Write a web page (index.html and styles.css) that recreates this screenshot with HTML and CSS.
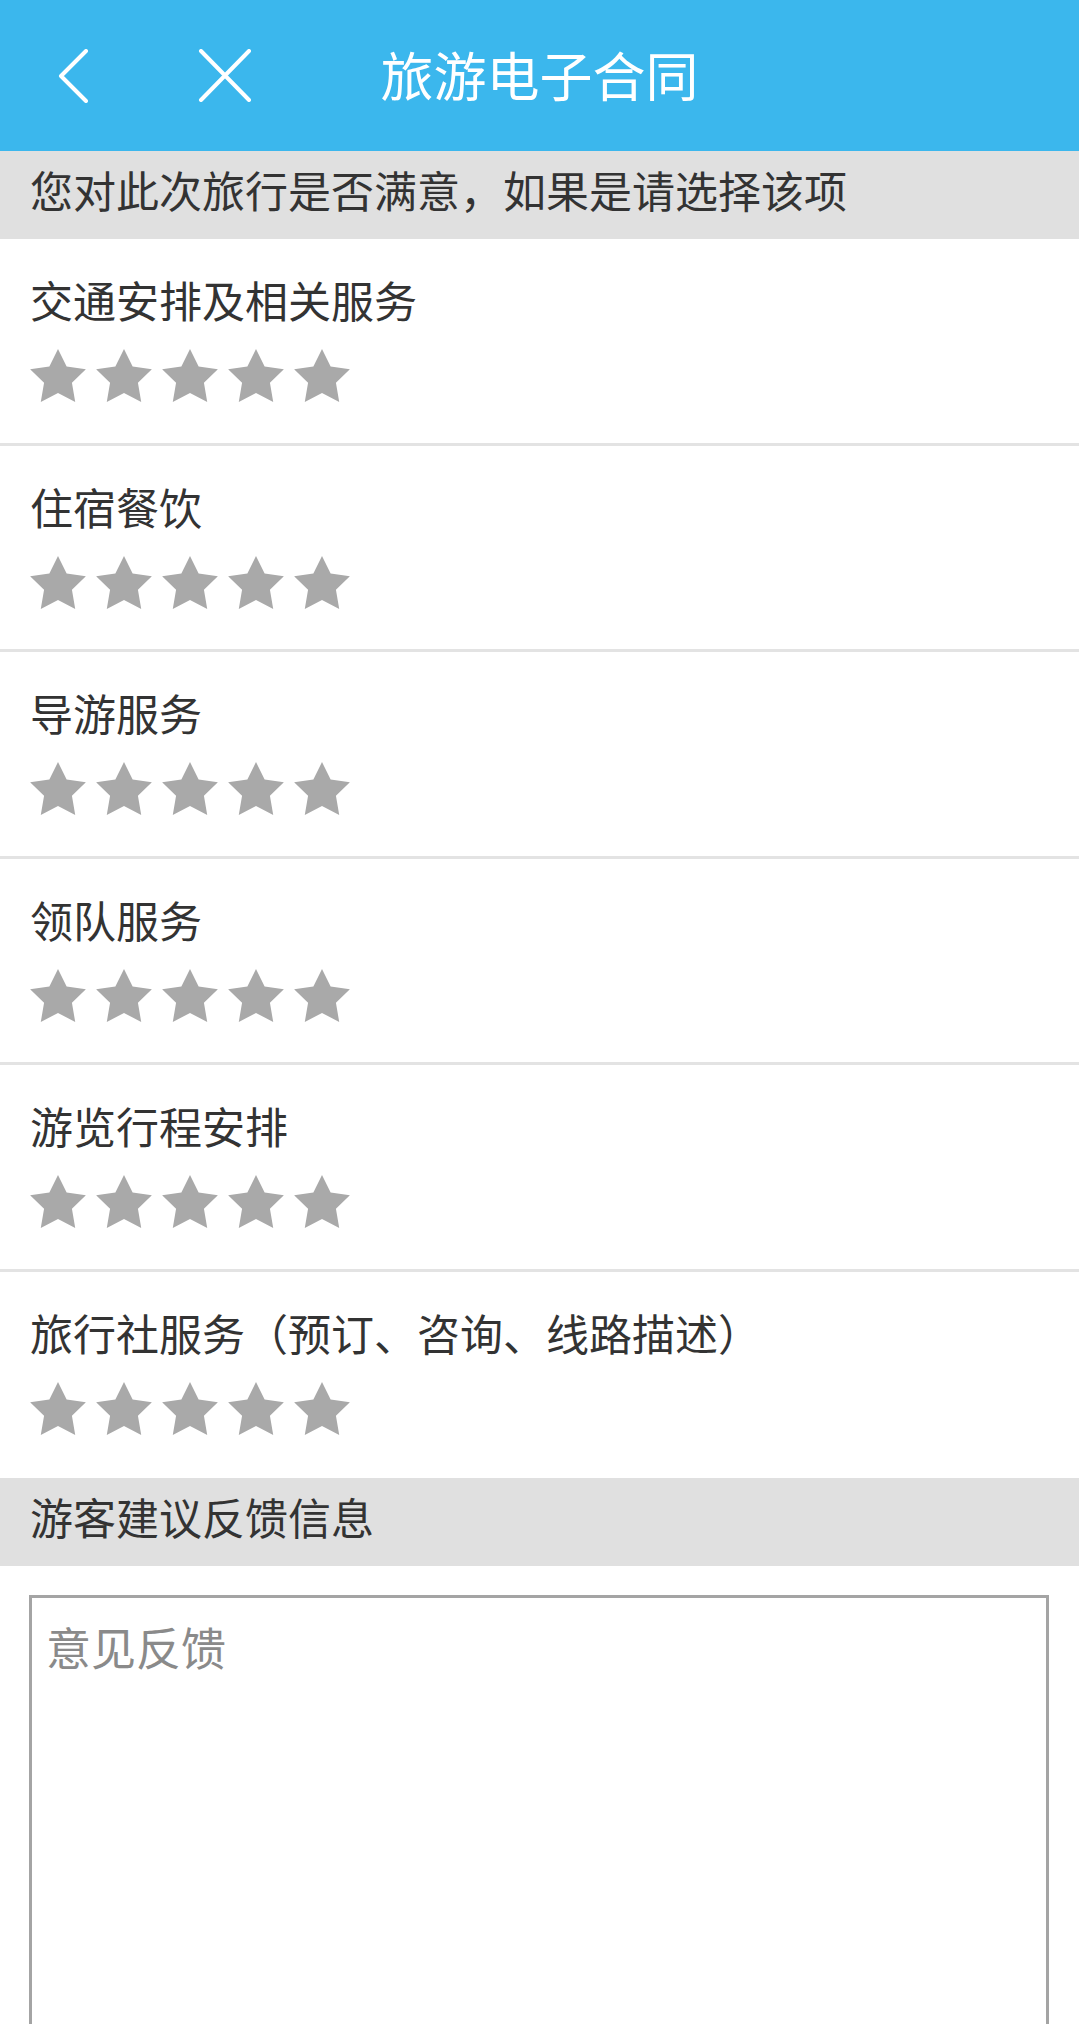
FILE: index.html
```html
<!DOCTYPE html>
<html lang="zh-CN">
<head>
<meta charset="utf-8">
<title>旅游电子合同</title>
<link rel="stylesheet" href="styles.css">
</head>
<body>
<header class="topbar">
  <div class="nav-icons">
    <svg class="icon-back" viewBox="0 0 30 54" aria-hidden="true"><polyline points="28,2 3,27 28,52" fill="none" stroke="#fff" stroke-width="4" stroke-linecap="round" stroke-linejoin="round"/></svg>
    <svg class="icon-close" viewBox="0 0 54 53" aria-hidden="true"><path d="M3 2 L51 51 M51 2 L3 51" fill="none" stroke="#fff" stroke-width="4" stroke-linecap="round"/></svg>
  </div>
  <h1 class="title">旅游电子合同</h1>
  <div></div>
</header>

<div class="section-bar">您对此次旅行是否满意，如果是请选择该项</div>

<div class="rating-list">
  <div class="rating-row">
    <div class="rating-label">交通安排及相关服务</div>
    <div class="stars">
      <svg class="star" viewBox="2 2 20 19.02"><path d="M12 2l3.09 6.26L22 9.27l-5 4.87 1.18 6.88L12 17.77l-6.18 3.25L7 14.14 2 9.27l6.91-1.01L12 2z"/></svg>
      <svg class="star" viewBox="2 2 20 19.02"><path d="M12 2l3.09 6.26L22 9.27l-5 4.87 1.18 6.88L12 17.77l-6.18 3.25L7 14.14 2 9.27l6.91-1.01L12 2z"/></svg>
      <svg class="star" viewBox="2 2 20 19.02"><path d="M12 2l3.09 6.26L22 9.27l-5 4.87 1.18 6.88L12 17.77l-6.18 3.25L7 14.14 2 9.27l6.91-1.01L12 2z"/></svg>
      <svg class="star" viewBox="2 2 20 19.02"><path d="M12 2l3.09 6.26L22 9.27l-5 4.87 1.18 6.88L12 17.77l-6.18 3.25L7 14.14 2 9.27l6.91-1.01L12 2z"/></svg>
      <svg class="star" viewBox="2 2 20 19.02"><path d="M12 2l3.09 6.26L22 9.27l-5 4.87 1.18 6.88L12 17.77l-6.18 3.25L7 14.14 2 9.27l6.91-1.01L12 2z"/></svg>
    </div>
  </div>
  <div class="rating-row">
    <div class="rating-label">住宿餐饮</div>
    <div class="stars">
      <svg class="star" viewBox="2 2 20 19.02"><path d="M12 2l3.09 6.26L22 9.27l-5 4.87 1.18 6.88L12 17.77l-6.18 3.25L7 14.14 2 9.27l6.91-1.01L12 2z"/></svg>
      <svg class="star" viewBox="2 2 20 19.02"><path d="M12 2l3.09 6.26L22 9.27l-5 4.87 1.18 6.88L12 17.77l-6.18 3.25L7 14.14 2 9.27l6.91-1.01L12 2z"/></svg>
      <svg class="star" viewBox="2 2 20 19.02"><path d="M12 2l3.09 6.26L22 9.27l-5 4.87 1.18 6.88L12 17.77l-6.18 3.25L7 14.14 2 9.27l6.91-1.01L12 2z"/></svg>
      <svg class="star" viewBox="2 2 20 19.02"><path d="M12 2l3.09 6.26L22 9.27l-5 4.87 1.18 6.88L12 17.77l-6.18 3.25L7 14.14 2 9.27l6.91-1.01L12 2z"/></svg>
      <svg class="star" viewBox="2 2 20 19.02"><path d="M12 2l3.09 6.26L22 9.27l-5 4.87 1.18 6.88L12 17.77l-6.18 3.25L7 14.14 2 9.27l6.91-1.01L12 2z"/></svg>
    </div>
  </div>
  <div class="rating-row">
    <div class="rating-label">导游服务</div>
    <div class="stars">
      <svg class="star" viewBox="2 2 20 19.02"><path d="M12 2l3.09 6.26L22 9.27l-5 4.87 1.18 6.88L12 17.77l-6.18 3.25L7 14.14 2 9.27l6.91-1.01L12 2z"/></svg>
      <svg class="star" viewBox="2 2 20 19.02"><path d="M12 2l3.09 6.26L22 9.27l-5 4.87 1.18 6.88L12 17.77l-6.18 3.25L7 14.14 2 9.27l6.91-1.01L12 2z"/></svg>
      <svg class="star" viewBox="2 2 20 19.02"><path d="M12 2l3.09 6.26L22 9.27l-5 4.87 1.18 6.88L12 17.77l-6.18 3.25L7 14.14 2 9.27l6.91-1.01L12 2z"/></svg>
      <svg class="star" viewBox="2 2 20 19.02"><path d="M12 2l3.09 6.26L22 9.27l-5 4.87 1.18 6.88L12 17.77l-6.18 3.25L7 14.14 2 9.27l6.91-1.01L12 2z"/></svg>
      <svg class="star" viewBox="2 2 20 19.02"><path d="M12 2l3.09 6.26L22 9.27l-5 4.87 1.18 6.88L12 17.77l-6.18 3.25L7 14.14 2 9.27l6.91-1.01L12 2z"/></svg>
    </div>
  </div>
  <div class="rating-row">
    <div class="rating-label">领队服务</div>
    <div class="stars">
      <svg class="star" viewBox="2 2 20 19.02"><path d="M12 2l3.09 6.26L22 9.27l-5 4.87 1.18 6.88L12 17.77l-6.18 3.25L7 14.14 2 9.27l6.91-1.01L12 2z"/></svg>
      <svg class="star" viewBox="2 2 20 19.02"><path d="M12 2l3.09 6.26L22 9.27l-5 4.87 1.18 6.88L12 17.77l-6.18 3.25L7 14.14 2 9.27l6.91-1.01L12 2z"/></svg>
      <svg class="star" viewBox="2 2 20 19.02"><path d="M12 2l3.09 6.26L22 9.27l-5 4.87 1.18 6.88L12 17.77l-6.18 3.25L7 14.14 2 9.27l6.91-1.01L12 2z"/></svg>
      <svg class="star" viewBox="2 2 20 19.02"><path d="M12 2l3.09 6.26L22 9.27l-5 4.87 1.18 6.88L12 17.77l-6.18 3.25L7 14.14 2 9.27l6.91-1.01L12 2z"/></svg>
      <svg class="star" viewBox="2 2 20 19.02"><path d="M12 2l3.09 6.26L22 9.27l-5 4.87 1.18 6.88L12 17.77l-6.18 3.25L7 14.14 2 9.27l6.91-1.01L12 2z"/></svg>
    </div>
  </div>
  <div class="rating-row">
    <div class="rating-label">游览行程安排</div>
    <div class="stars">
      <svg class="star" viewBox="2 2 20 19.02"><path d="M12 2l3.09 6.26L22 9.27l-5 4.87 1.18 6.88L12 17.77l-6.18 3.25L7 14.14 2 9.27l6.91-1.01L12 2z"/></svg>
      <svg class="star" viewBox="2 2 20 19.02"><path d="M12 2l3.09 6.26L22 9.27l-5 4.87 1.18 6.88L12 17.77l-6.18 3.25L7 14.14 2 9.27l6.91-1.01L12 2z"/></svg>
      <svg class="star" viewBox="2 2 20 19.02"><path d="M12 2l3.09 6.26L22 9.27l-5 4.87 1.18 6.88L12 17.77l-6.18 3.25L7 14.14 2 9.27l6.91-1.01L12 2z"/></svg>
      <svg class="star" viewBox="2 2 20 19.02"><path d="M12 2l3.09 6.26L22 9.27l-5 4.87 1.18 6.88L12 17.77l-6.18 3.25L7 14.14 2 9.27l6.91-1.01L12 2z"/></svg>
      <svg class="star" viewBox="2 2 20 19.02"><path d="M12 2l3.09 6.26L22 9.27l-5 4.87 1.18 6.88L12 17.77l-6.18 3.25L7 14.14 2 9.27l6.91-1.01L12 2z"/></svg>
    </div>
  </div>
  <div class="rating-row">
    <div class="rating-label">旅行社服务（预订、咨询、线路描述）</div>
    <div class="stars">
      <svg class="star" viewBox="2 2 20 19.02"><path d="M12 2l3.09 6.26L22 9.27l-5 4.87 1.18 6.88L12 17.77l-6.18 3.25L7 14.14 2 9.27l6.91-1.01L12 2z"/></svg>
      <svg class="star" viewBox="2 2 20 19.02"><path d="M12 2l3.09 6.26L22 9.27l-5 4.87 1.18 6.88L12 17.77l-6.18 3.25L7 14.14 2 9.27l6.91-1.01L12 2z"/></svg>
      <svg class="star" viewBox="2 2 20 19.02"><path d="M12 2l3.09 6.26L22 9.27l-5 4.87 1.18 6.88L12 17.77l-6.18 3.25L7 14.14 2 9.27l6.91-1.01L12 2z"/></svg>
      <svg class="star" viewBox="2 2 20 19.02"><path d="M12 2l3.09 6.26L22 9.27l-5 4.87 1.18 6.88L12 17.77l-6.18 3.25L7 14.14 2 9.27l6.91-1.01L12 2z"/></svg>
      <svg class="star" viewBox="2 2 20 19.02"><path d="M12 2l3.09 6.26L22 9.27l-5 4.87 1.18 6.88L12 17.77l-6.18 3.25L7 14.14 2 9.27l6.91-1.01L12 2z"/></svg>
    </div>
  </div>
</div>

<div class="section-bar">游客建议反馈信息</div>

<div class="feedback">
  <textarea class="feedback-input" placeholder="意见反馈"></textarea>
</div>
</body>
</html>
```

FILE: styles.css
```css
* { box-sizing: border-box; }

html, body {
  margin: 0;
  padding: 0;
  background: #ffffff;
}

body {
  width: 1079px;
  font-family: "Noto Sans CJK SC", "Noto Sans", sans-serif;
  color: #333333;
}

.topbar {
  height: 151px;
  background: #3bb7ed;
  display: grid;
  grid-template-columns: 1fr auto 1fr;
  align-items: center;
}

.nav-icons {
  display: flex;
  align-items: center;
  padding-left: 58px;
  gap: 110px;
}

.icon-back {
  width: 30px;
  height: 54px;
  display: block;
}

.icon-close {
  width: 54px;
  height: 53px;
  display: block;
}

.title {
  margin: 0 0 4px;
  font-size: 53px;
  font-weight: 400;
  color: #ffffff;
  line-height: 60px;
}

.section-bar {
  height: 88px;
  background: #e0e0e0;
  padding-left: 30px;
  font-size: 43px;
  line-height: 76px;
  color: #333333;
}

.rating-row {
  height: 206.5px;
  padding: 35px 0 0 30px;
  border-bottom: 3px solid #e3e3e3;
}

.rating-row:last-child {
  border-bottom: none;
}

.rating-label {
  font-size: 43px;
  line-height: 50px;
  color: #333333;
}

.stars {
  display: flex;
  gap: 10px;
  margin-top: 25px;
}

.star {
  width: 56px;
  height: 53px;
  display: block;
  fill: #a9a9a9;
}

.feedback {
  padding: 29px 30px 0 29px;
}

.feedback-input {
  display: block;
  width: 1020px;
  height: 520px;
  border: 3px solid #a4a4a4;
  border-radius: 0;
  padding: 19px 14px;
  font-family: "Noto Sans CJK SC", "Noto Sans", sans-serif;
  font-size: 45px;
  line-height: 60px;
  color: #333333;
  resize: none;
  outline: none;
  background: #ffffff;
}

.feedback-input::placeholder {
  color: #8a8a8a;
  opacity: 1;
}
```
